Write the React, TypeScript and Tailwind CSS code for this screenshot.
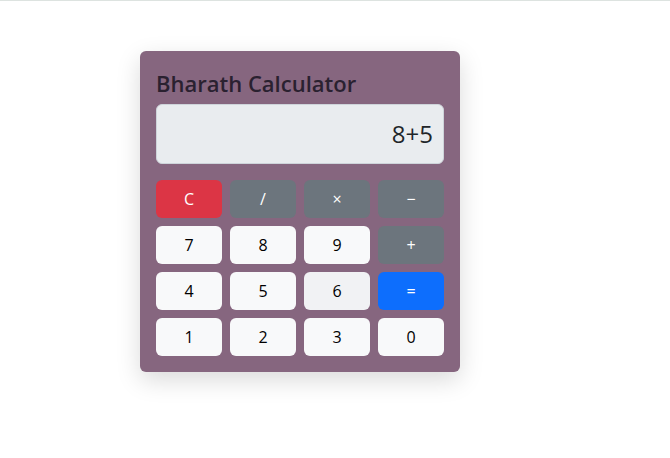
import React from "react";

type Key = { label: string; kind: "danger" | "op" | "num" | "num-hover" | "primary" };

const keys: Key[] = [
  { label: "C", kind: "danger" },
  { label: "/", kind: "op" },
  { label: "×", kind: "op" },
  { label: "−", kind: "op" },
  { label: "7", kind: "num" },
  { label: "8", kind: "num" },
  { label: "9", kind: "num" },
  { label: "+", kind: "op" },
  { label: "4", kind: "num" },
  { label: "5", kind: "num" },
  { label: "6", kind: "num-hover" },
  { label: "=", kind: "primary" },
  { label: "1", kind: "num" },
  { label: "2", kind: "num" },
  { label: "3", kind: "num" },
  { label: "0", kind: "num" },
];

const styles: Record<Key["kind"], string> = {
  danger: "bg-[#dc3545] text-white",
  op: "bg-[#6c757d] text-white",
  num: "bg-[#f8f9fa] text-black",
  "num-hover": "bg-[#f1f2f4] text-black",
  primary: "bg-[#0d6efd] text-white",
};

function App() {
  return (
    <div className="min-h-screen w-full bg-white border-t border-[#dde3e0] font-['Segoe_UI','Open_Sans',sans-serif]">
      <div className="pt-[50px] pl-[140px]">
        <div className="w-[320px] rounded-md bg-[#86667f] p-4 shadow-[0_8px_24px_rgba(0,0,0,0.15)]">
          <h2 className="text-[22px] font-semibold leading-[26px] text-[#2a2130] mt-[3px] mb-[8px]">
            Bharath Calculator
          </h2>
          <div className="h-[60px] rounded-md bg-[#e9ecef] border border-[#ced4da] flex items-center justify-end px-[10px] text-[24px] text-[#212529] mb-4">
            8+5
          </div>
          <div className="grid grid-cols-4 gap-2">
            {keys.map((k) => (
              <button
                key={k.label}
                className={`h-[38px] rounded-md text-[16px] flex items-center justify-center ${styles[k.kind]}`}
              >
                {k.label}
              </button>
            ))}
          </div>
        </div>
      </div>
    </div>
  );
}

export default App;
